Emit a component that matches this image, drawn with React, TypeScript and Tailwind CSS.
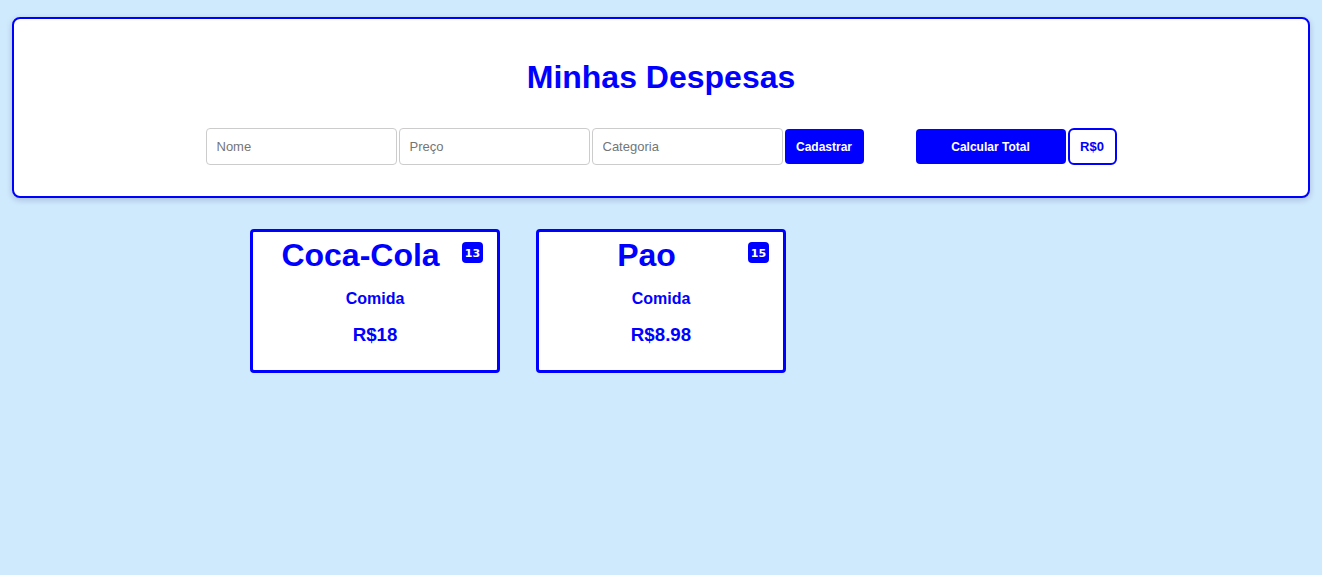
const despesas = [
  { id: 13, nome: "Coca-Cola", categoria: "Comida", preco: "18" },
  { id: 15, nome: "Pao", categoria: "Comida", preco: "8.98" },
];

export default function App() {
  return (
    <div className="min-h-screen bg-[#cfe9fd] px-[12px] pt-[17px] font-['Liberation_Sans',Arial,sans-serif]">
      <header className="flex flex-col items-center rounded-[8px] border-2 border-[#0000ff] bg-white pt-[40px] pb-[31px] shadow-[0_2px_6px_rgba(0,0,80,0.18)]">
        <h1 className="text-[32px] font-bold leading-[37px] text-[#0000ff]">Minhas Despesas</h1>
        <div className="mt-[32px] flex items-center">
          <div className="flex items-center gap-[2px]">
            <Campo placeholder="Nome" />
            <Campo placeholder="Preço" />
            <Campo placeholder="Categoria" />
            <button className="h-[35px] w-[79px] rounded-[4px] bg-[#0000ff] text-[12px] font-bold text-white">
              Cadastrar
            </button>
          </div>
          <div className="ml-[52px] flex items-center gap-[2px]">
            <button className="h-[35px] w-[150px] rounded-[4px] bg-[#0000ff] text-[12px] font-bold text-white">
              Calcular Total
            </button>
            <div className="flex h-[37px] w-[49px] items-center justify-center rounded-[6px] border-2 border-[#0000ff] bg-white text-[13px] font-bold text-[#0000ff]">
              R$0
            </div>
          </div>
        </div>
      </header>

      <main className="mt-[31px] flex gap-[36px] pl-[238px]">
        {despesas.map((d) => (
          <div
            key={d.id}
            className="relative flex h-[144px] w-[250px] flex-col items-center rounded-[4px] border-[3px] border-[#0000ff] bg-white text-[#0000ff]"
          >
            <span className="absolute right-[14px] top-[10px] flex h-[21px] w-[21px] items-center justify-center rounded-[4px] bg-[#0000ff] pt-[1px] font-['DejaVu_Sans',sans-serif] text-[11px] font-bold leading-none text-white">
              {d.id}
            </span>
            <h2 className="mt-[5px] w-full pr-[29px] text-center text-[32px] font-bold leading-[37px]">{d.nome}</h2>
            <p className="mt-[16px] text-[16px] font-bold leading-[18px]">{d.categoria}</p>
            <p className="mt-[16px] text-[18.72px] font-bold leading-[22px]">R${d.preco}</p>
          </div>
        ))}
      </main>
    </div>
  );
}

function Campo({ placeholder }: { placeholder: string }) {
  return (
    <input
      placeholder={placeholder}
      className="h-[37px] w-[191px] rounded-[4px] border border-[#cccccc] bg-white px-[10px] text-[13px] text-black outline-none placeholder:text-[#757575]"
    />
  );
}
